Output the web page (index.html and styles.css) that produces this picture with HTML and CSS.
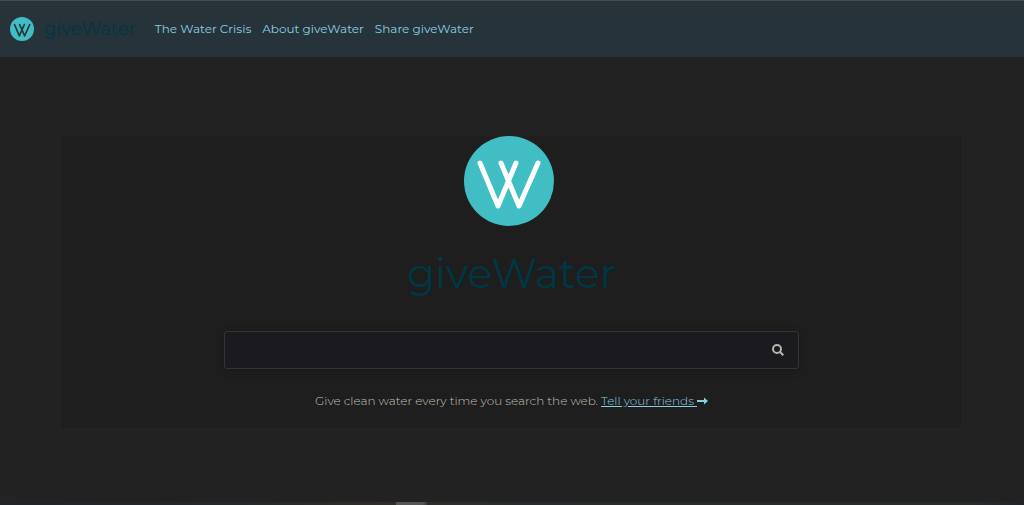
FILE: index.html
```html
<!DOCTYPE html>
<html lang="en">
<head>
<meta charset="utf-8">
<meta name="viewport" content="width=device-width, initial-scale=1">
<title>giveWater</title>
<link rel="stylesheet" href="styles.css">
</head>
<body>
<header class="header">
  <a class="brand" href="#">
    <svg class="brand-mark" viewBox="0 0 90 90" aria-hidden="true">
      <circle class="disc" cx="45" cy="45" r="45"/>
      <path class="mark-line" d="M17 28 35 71 54 28M36 28 55 71 74 28"/>
    </svg>
    <span class="brand-name">giveWater</span>
  </a>
  <nav class="nav">
    <a href="#">The Water Crisis</a>
    <a href="#">About giveWater</a>
    <a href="#">Share giveWater</a>
  </nav>
</header>
<main class="main">
  <section class="panel">
    <svg class="logo-mark" viewBox="0 0 96 91" aria-hidden="true">
      <circle class="disc" cx="45" cy="45" r="45"/>
      <path class="logo-line" d="M16 27 34 70 52 27M37 27 55 70 74 27"/>
    </svg>
    <h1 class="wordmark">giveWater</h1>
    <form class="search">
      <input class="search-input" type="text" aria-label="Search the web">
      <button class="search-button" type="button" aria-label="Search">
        <svg class="search-icon" viewBox="0 0 12 12" aria-hidden="true"><circle cx="5" cy="5" r="4"/><path d="m8 8 3.300 3.300"/></svg>
      </button>
    </form>
    <p class="tagline">Give clean water every time you search the web. <a href="#">Tell your friends <svg class="arrow" viewBox="0 0 11 8" aria-hidden="true"><path d="M0 3h7V0.500L11 4 7 7.500V5H0z"/></svg></a></p>
  </section>
</main>
<footer class="strip"><div class="strip-light"></div></footer>
</body>
</html>
```
FILE: styles.css
```css
* { box-sizing: border-box; }
body {
  margin: 0;
  min-height: 100vh;
  display: flex;
  flex-direction: column;
  background: #222;
  color: #c4c0ba;
  font-family: Montserrat, Inter, "Liberation Sans", sans-serif;
  font-size: 12px;
  font-weight: 300;
  line-height: 18px;
}
a { color: #86d0e2; }
.header {
  display: flex;
  align-items: center;
  gap: 19px;
  padding: 16px 10px;
  border-top: 1px solid #4a4a49;
  background: #27333a;
}
.brand { display: flex; align-items: center; gap: 10px; text-decoration: none; }
.brand-mark { width: 24px; height: 24px; }
.disc { fill: #40bec4; }
.mark-line, .logo-line { fill: none; stroke-linecap: round; stroke-linejoin: round; }
.mark-line { stroke: #27333a; stroke-width: 6; }
.logo-line { stroke: #fff; stroke-width: 5; }
.brand-name, .wordmark { font-weight: 400; color: #003744; }
.brand-name { font-size: 18px; line-height: 24px; }
.nav { display: flex; gap: 11px; font-weight: 400; }
.nav a { text-decoration: none; }
.main { flex: 1; padding: 79px 63px 74px 62px; }
.panel {
  display: flex;
  flex-direction: column;
  align-items: center;
  padding-bottom: 18px;
  background: #1e1e1e;
}
.logo-mark { width: 96px; height: 91px; }
.wordmark { margin: 18px 0 30px; font-size: 41px; line-height: 56px; }
.search {
  display: flex;
  width: 64%;
  height: 38px;
  border: 1px solid #343435;
  border-radius: 3px;
  background: #1b1a1f;
  box-shadow: 0 2px 10px rgba(0, 0, 0, 0.2);
}
.search-input {
  flex: 1;
  min-width: 0;
  padding: 0 12px;
  border: 0;
  outline: 0;
  background: transparent;
  color: #d0ccc6;
  font: inherit;
}
.search-button { display: flex; align-items: center; padding: 0 14px; border: 0; background: transparent; }
.search-icon { width: 12px; height: 12px; fill: none; stroke: #b8b4ae; stroke-width: 2; }
.tagline { margin: 23px 0 0; }
.arrow { width: 11px; height: 8px; fill: #86d0e2; }
.strip { height: 3px; background: linear-gradient(90deg, #20242a 0%, #252929 25%, #302d2a 38%, #292c2c 50%, #292b2b 95%, #20242a 100%); }
.strip-light { width: 3%; height: 3px; margin-left: 38.7%; background: linear-gradient(90deg, #555 85%, #3b3b3b 100%); }
```
